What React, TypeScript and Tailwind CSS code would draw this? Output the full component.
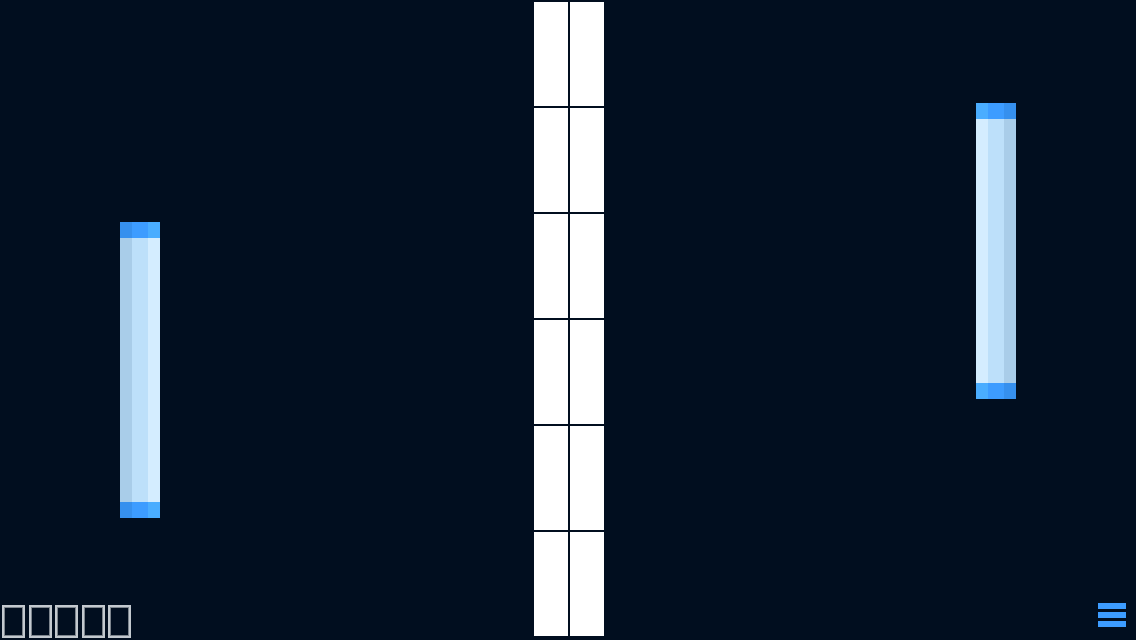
import { FC, ReactElement } from 'react'

interface PaddleProps {
  left: number
  top: number
  mirrored?: boolean
}

const Paddle: FC<PaddleProps> = ({ left, top, mirrored = false }): ReactElement => {
  const cap = mirrored ? ['bg-[#4aadff]', 'bg-[#3d9cff]', 'bg-[#3690ee]'] : ['bg-[#3690ee]', 'bg-[#3d9cff]', 'bg-[#4aadff]']
  const body = mirrored ? ['bg-[#d4edff]', 'bg-[#bde0fa]', 'bg-[#a9cde9]'] : ['bg-[#a9cde9]', 'bg-[#bde0fa]', 'bg-[#d4edff]']
  const widths = ['w-[12px]', 'w-[16px]', 'w-[12px]']

  function renderRow(colors: string[], height: string) {
    return (
      <div className={`flex ${height}`}>
        {colors.map((c, i) => (
          <div key={i} className={`${widths[i]} ${c}`} />
        ))}
      </div>
    )
  }

  return (
    <div className="absolute flex w-[40px] flex-col" style={{ left, top }}>
      {renderRow(cap, 'h-[16px]')}
      {renderRow(body, 'h-[264px]')}
      {renderRow(cap, 'h-[16px]')}
    </div>
  )
}

const App: FC = (): ReactElement => {
  return (
    <div className="relative h-[640px] w-[1136px] overflow-hidden bg-[#010e1f]">
      <div className="flex justify-center pt-[2px] pl-[2px]">
        <div className="grid w-[70px] grid-cols-2 gap-[2px]">
          {Array.from({ length: 12 }).map((_, i) => (
            <div key={i} className="h-[104px] bg-white" />
          ))}
        </div>
      </div>

      <Paddle left={120} top={222} />
      <Paddle left={976} top={103} mirrored />

      {/* score label: glyphs missing in the original, shown as tofu boxes */}
      <div className="absolute left-[2px] top-[605px] flex gap-[3.5px]">
        {Array.from({ length: 5 }).map((_, i) => (
          <span
            key={i}
            className="block h-[33px] w-[23px] border-2 border-[#c3c9cf] shadow-[inset_0_0_0_1px_#7d858d]"
          />
        ))}
      </div>

      <div className="absolute left-[1098px] top-[603px] flex w-[28px] flex-col gap-[3px]">
        <div className="h-[6px] bg-[#3d9cff]" />
        <div className="h-[6px] bg-[#3d9cff]" />
        <div className="h-[6px] bg-[#3d9cff]" />
      </div>
    </div>
  )
}

export default App
